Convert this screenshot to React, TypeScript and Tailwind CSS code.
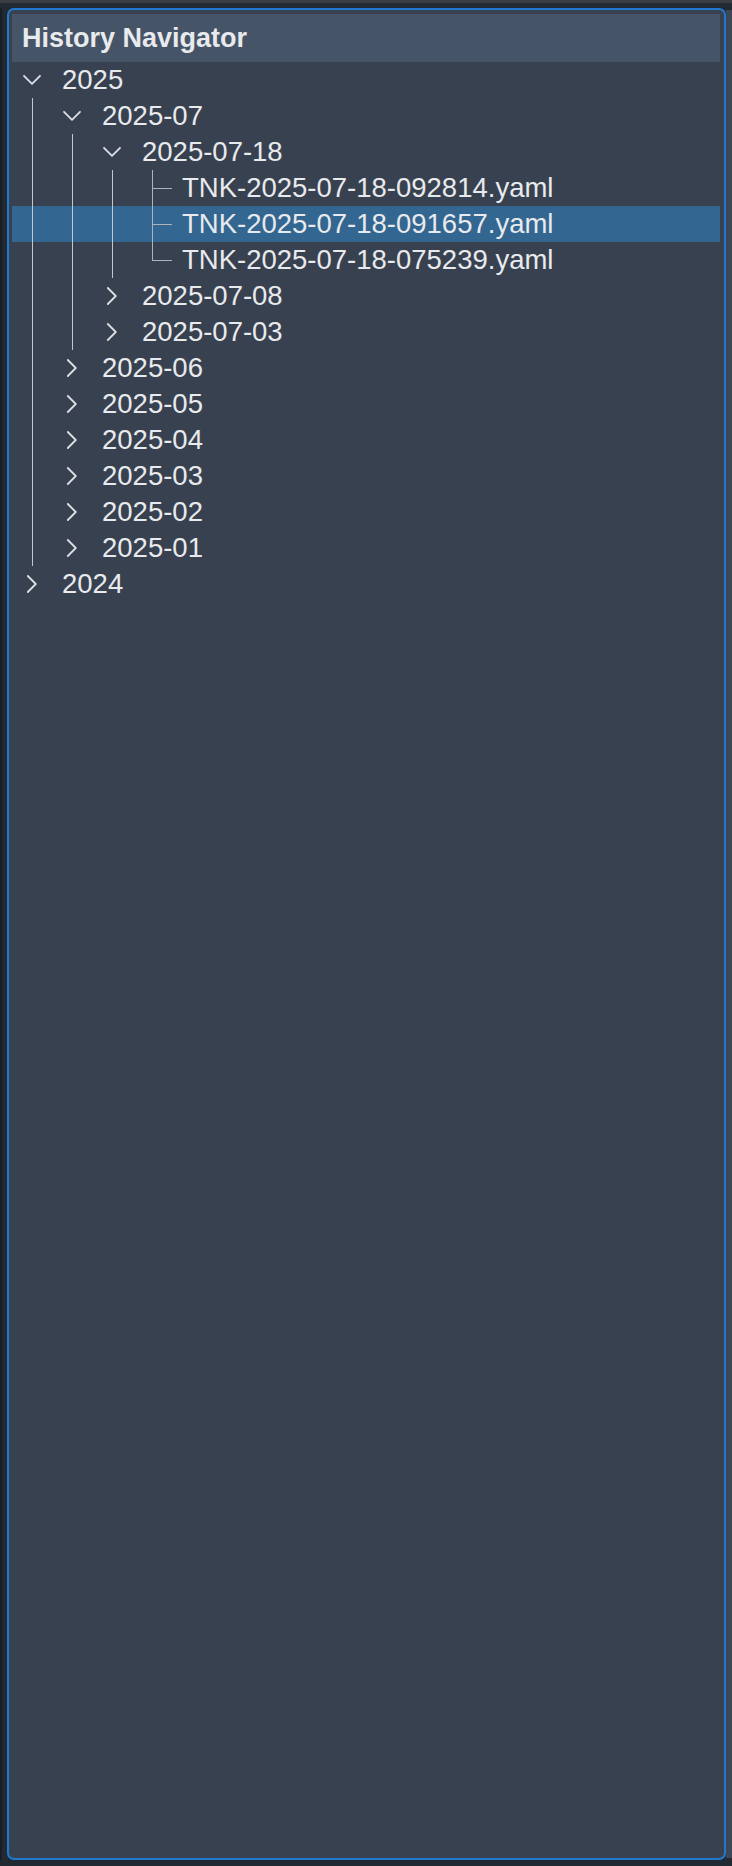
import { useState } from "react";

type Node = {
  id: string;
  label: string;
  children?: Node[];
};

const tree: Node[] = [
  {
    id: "2025",
    label: "2025",
    children: [
      {
        id: "2025-07",
        label: "2025-07",
        children: [
          {
            id: "2025-07-18",
            label: "2025-07-18",
            children: [
              { id: "f1", label: "TNK-2025-07-18-092814.yaml" },
              { id: "f2", label: "TNK-2025-07-18-091657.yaml" },
              { id: "f3", label: "TNK-2025-07-18-075239.yaml" },
            ],
          },
          { id: "2025-07-08", label: "2025-07-08", children: [] },
          { id: "2025-07-03", label: "2025-07-03", children: [] },
        ],
      },
      { id: "2025-06", label: "2025-06", children: [] },
      { id: "2025-05", label: "2025-05", children: [] },
      { id: "2025-04", label: "2025-04", children: [] },
      { id: "2025-03", label: "2025-03", children: [] },
      { id: "2025-02", label: "2025-02", children: [] },
      { id: "2025-01", label: "2025-01", children: [] },
    ],
  },
  { id: "2024", label: "2024", children: [] },
];

function Chevron({ open }: { open: boolean }) {
  return (
    <svg width="20" height="20" viewBox="0 0 20 20" fill="none" className="shrink-0">
      {open ? (
        <polyline points="2,5.8 10,13.8 18,5.8" stroke="#dcdfe3" strokeWidth="1.8" strokeLinecap="round" strokeLinejoin="round" />
      ) : (
        <polyline points="5.8,2 13.8,10 5.8,18" stroke="#dcdfe3" strokeWidth="1.8" strokeLinecap="round" strokeLinejoin="round" />
      )}
    </svg>
  );
}

const indents = ["pl-[10px]", "pl-[50px]", "pl-[90px]", "pl-[130px]"];
const guides = ["left-[20px]", "left-[60px]", "left-[100px]", "left-[140px]"];

interface TreeNodeProps {
  node: Node;
  level: number;
  isLast: boolean;
  expanded: Record<string, boolean>;
  selected: string;
  onToggle: (id: string) => void;
  onSelect: (id: string) => void;
}

function TreeNode({ node, level, isLast, expanded, selected, onToggle, onSelect }: TreeNodeProps) {
  const isLeaf = !node.children;
  const open = !!expanded[node.id];
  const isSelected = selected === node.id;

  return (
    <div>
      <div
        onClick={() => (isLeaf ? onSelect(node.id) : onToggle(node.id))}
        className={`flex h-[36px] cursor-default items-center ${indents[level]} ${isSelected ? "bg-[#336690]" : ""}`}
      >
        {isLeaf ? (
          <div className="relative h-[36px] w-[40px] shrink-0">
            <div className={`absolute left-[10px] top-0 w-px bg-[#aeb3ba] ${isLast ? "h-[18px]" : "h-[36px]"}`} />
            <div className="absolute left-[10px] top-[18px] h-px w-[20px] bg-[#aeb3ba]" />
          </div>
        ) : (
          <div className="flex w-[40px] shrink-0 items-center">
            <Chevron open={open} />
          </div>
        )}
        <span className="whitespace-nowrap text-[27.5px] leading-[36px] text-[#e8eaed]">{node.label}</span>
      </div>
      {!isLeaf && open && node.children!.length > 0 && (
        <div className="relative">
          {node.children!.map((child, i) => (
            <TreeNode
              key={child.id}
              node={child}
              level={level + 1}
              isLast={i === node.children!.length - 1}
              expanded={expanded}
              selected={selected}
              onToggle={onToggle}
              onSelect={onSelect}
            />
          ))}
          <div className={`pointer-events-none absolute top-0 bottom-0 w-px bg-[#c3c7cc] ${guides[level]}`} />
        </div>
      )}
    </div>
  );
}

export default function App() {
  const [expanded, setExpanded] = useState<Record<string, boolean>>({
    "2025": true,
    "2025-07": true,
    "2025-07-18": true,
  });
  const [selected, setSelected] = useState("f2");

  const toggle = (id: string) => setExpanded((prev) => ({ ...prev, [id]: !prev[id] }));

  return (
    <div className="flex h-[1866px] w-[732px] flex-col bg-[#212932] font-['Liberation_Sans',Arial,sans-serif]">
      <div className="h-[3px] bg-[#3a3d42]" />
      <div className="flex flex-1 pt-[5px] pb-[6px]">
        <div className="w-[2px] bg-[#191e24]" />
        <div className="w-[5px]" />
        <section className="flex flex-1 flex-col rounded-[7px] border-2 border-[#2178cf] bg-[#384150] pt-[4px] pr-[4px] pl-[3px]">
          <header className="flex h-[48px] items-center bg-[#465467] pl-[10px]">
            <h2 className="text-[27px] font-bold text-[#e8eaed]">History Navigator</h2>
          </header>
          <div>
            {tree.map((node, i) => (
              <TreeNode
                key={node.id}
                node={node}
                level={0}
                isLast={i === tree.length - 1}
                expanded={expanded}
                selected={selected}
                onToggle={toggle}
                onSelect={setSelected}
              />
            ))}
          </div>
        </section>
        <div className="my-[2px] w-[6px] bg-[#3d4653]" />
      </div>
    </div>
  );
}
